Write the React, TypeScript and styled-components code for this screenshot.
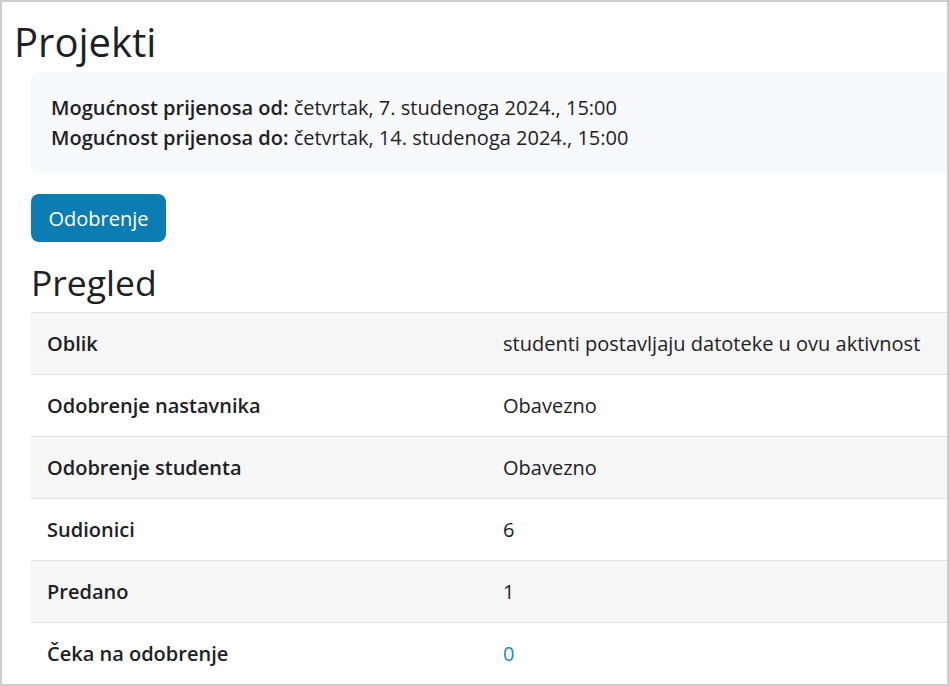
import React from "react";
import styled, { createGlobalStyle } from "styled-components";

const GlobalStyle = createGlobalStyle`
  html, body {
    margin: 0;
    padding: 0;
    background: #ffffff;
  }
  body {
    font-family: "Open Sans", "Liberation Sans", sans-serif;
    color: #1d2125;
  }
`;

const Frame = styled.div`
  box-sizing: border-box;
  width: 949px;
  height: 686px;
  border: 2px solid #cdcdcd;
  overflow: hidden;
  background: #fff;
`;

const Title = styled.h1`
  margin: 0;
  padding: 14px 0 0 12px;
  font-size: 40px;
  font-weight: 400;
  line-height: 52px;
  color: #1d2125;
`;

const Main = styled.div`
  padding: 4px 0 0 29px;
`;

const InfoBox = styled.div`
  box-sizing: border-box;
  height: 101px;
  padding: 21px 20px 0;
  margin-right: -8px;
  background: #f8f9fa;
  border-radius: 8px;
  font-size: 20px;
  line-height: 30px;
`;

const InfoLine = styled.div`
  white-space: nowrap;
`;

const Label = styled.strong`
  font-weight: 600;
`;

const Button = styled.button`
  margin-top: 21px;
  box-sizing: border-box;
  width: 135px;
  height: 48px;
  padding: 0;
  border: 0;
  border-radius: 8px;
  background: #0b7db3;
  color: #fff;
  font-family: "Open Sans", "Liberation Sans", sans-serif;
  font-size: 20px;
`;

const Heading = styled.h2`
  margin: 14px 0 4px 0;
  font-size: 35.5px;
  font-weight: 400;
  line-height: 52px;
  color: #1d2125;
`;

const Table = styled.table`
  width: 930px;
  border-collapse: collapse;
  font-size: 20px;
`;

const Row = styled.tr<{ $striped?: boolean }>`
  background: ${(p) => (p.$striped ? "#f6f6f6" : "#fff")};
  border-top: 1px solid #e0e2e6;
`;

const Head = styled.th`
  width: 424px;
  height: 61px;
  padding: 0 16px;
  text-align: left;
  font-weight: 600;
`;

const Cell = styled.td`
  padding: 0 16px;
  white-space: nowrap;
`;

const Link = styled.a`
  color: #1a8dc4;
  text-decoration: none;
`;

const rows: { label: string; value: React.ReactNode }[] = [
  { label: "Oblik", value: "studenti postavljaju datoteke u ovu aktivnost" },
  { label: "Odobrenje nastavnika", value: "Obavezno" },
  { label: "Odobrenje studenta", value: "Obavezno" },
  { label: "Sudionici", value: "6" },
  { label: "Predano", value: "1" },
  { label: "Čeka na odobrenje", value: <Link href="#">0</Link> },
];

export default function App() {
  return (
    <>
      <GlobalStyle />
      <Frame>
        <Title>Projekti</Title>
        <Main>
          <InfoBox>
            <InfoLine>
              <Label>Mogućnost prijenosa od:</Label> četvrtak, 7. studenoga 2024., 15:00
            </InfoLine>
            <InfoLine>
              <Label>Mogućnost prijenosa do:</Label> četvrtak, 14. studenoga 2024., 15:00
            </InfoLine>
          </InfoBox>
          <Button>Odobrenje</Button>
          <Heading>Pregled</Heading>
          <Table>
            <tbody>
              {rows.map((r, i) => (
                <Row key={r.label} $striped={i % 2 === 0}>
                  <Head>{r.label}</Head>
                  <Cell>{r.value}</Cell>
                </Row>
              ))}
            </tbody>
          </Table>
        </Main>
      </Frame>
    </>
  );
}
